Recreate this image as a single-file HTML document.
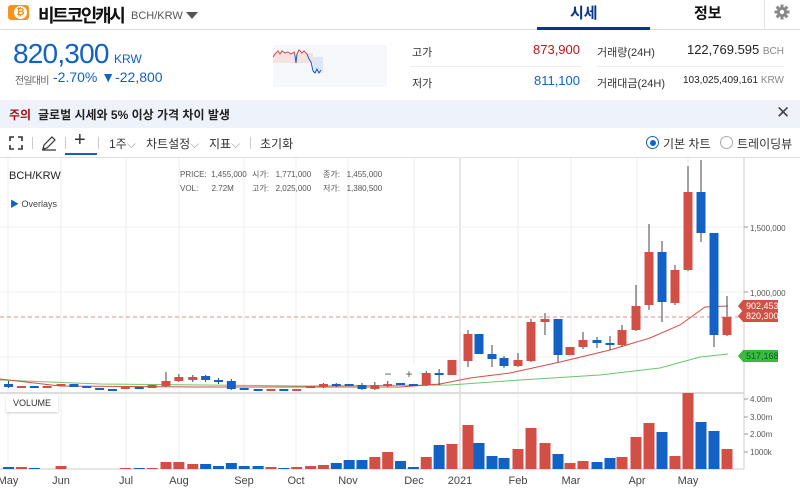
<!DOCTYPE html>
<html><head><meta charset="utf-8">
<style>
*{margin:0;padding:0;box-sizing:border-box}
body{width:800px;height:491px;overflow:hidden;background:#fff;font-family:"Liberation Sans","Noto Sans CJK KR",sans-serif;color:#222;position:relative}
.a{position:absolute;white-space:nowrap}
</style></head><body>
<div class="a" style="left:0;top:0;width:800px;height:30px;border-bottom:1px solid #ddd"></div>
<div class="a" style="left:8px;top:5px;width:21px;height:15px;background:#f7931a;border-radius:3px"></div>
<div class="a" style="left:14px;top:6px;width:13px;height:13px;border-radius:50%;background:#fff;color:#f7931a;font-size:10px;font-weight:bold;text-align:center;line-height:13px">₿</div>
<div class="a" style="left:38px;top:2px;font-size:18px;font-weight:bold;color:#111;letter-spacing:-2.3px">비트코인캐시</div>
<div class="a" style="left:131px;top:10px;font-size:11px;color:#555">BCH/KRW</div>
<div class="a" style="left:186px;top:12px;width:0;height:0;border-left:6px solid transparent;border-right:6px solid transparent;border-top:7px solid #555"></div>
<div class="a" style="left:570px;top:2px;font-size:15px;font-weight:bold;color:#093687">시세</div>
<div class="a" style="left:537px;top:27px;width:113px;height:3px;background:#093687"></div>
<div class="a" style="left:694px;top:2px;font-size:15px;font-weight:bold;color:#111">정보</div>
<div class="a" style="left:764px;top:0;width:1px;height:30px;background:#e5e5e5"></div>
<svg class="a" style="left:774px;top:4px" width="16" height="16" viewBox="0 0 16 16"><g fill="#888"><circle cx="8" cy="8" r="5"/><rect x="6.5" y="0.5" width="3" height="15"/><rect x="0.5" y="6.5" width="15" height="3"/><rect x="6.5" y="0.5" width="3" height="15" transform="rotate(45 8 8)"/><rect x="6.5" y="0.5" width="3" height="15" transform="rotate(-45 8 8)"/></g><circle cx="8" cy="8" r="2.2" fill="#fff"/></svg>
<div class="a" style="left:13px;top:38px;font-size:28px;color:#1261c4;letter-spacing:-0.8px">820,300</div>
<div class="a" style="left:114px;top:52px;font-size:12px;color:#1261c4">KRW</div>
<div class="a" style="left:15px;top:72px;font-size:10px;color:#666;letter-spacing:-0.8px">전일대비</div>
<div class="a" style="left:53px;top:69px;font-size:14px;color:#1261c4">-2.70% ▼-22,800</div>
<svg class="a" style="left:273px;top:45px" width="114" height="42"><rect width="114" height="42" fill="#f6f8fc"/><rect x="0" y="8" width="40" height="10" fill="#f7e2e2"/><rect x="40" y="12" width="10" height="16" fill="#dde7f6"/><polyline fill="none" stroke="#c84a4a" stroke-width="1" points="0,12 3,8 5,6 7,9 9,6 12,8 15,7 18,9 21,7 22,11"/><polyline fill="none" stroke="#c84a4a" stroke-width="1" points="24,9 26,5 29,8 31,6 34,9"/><polyline fill="none" stroke="#1261c4" stroke-width="1" points="22,11 23,18 24,9"/><polyline fill="none" stroke="#1261c4" stroke-width="1" points="34,9 36,14 38,17 40,26 42,28 44,24 46,28 48,25"/></svg>
<div class="a" style="left:412px;top:44px;font-size:11px;color:#333">고가</div>
<div class="a" style="left:520px;top:42px;font-size:13px;color:#c01616;width:60px;text-align:right">873,900</div>
<div class="a" style="left:410px;top:66px;width:172px;height:1px;background:#eee"></div>
<div class="a" style="left:412px;top:75px;font-size:11px;color:#333">저가</div>
<div class="a" style="left:520px;top:73px;font-size:13px;color:#1261c4;width:60px;text-align:right">811,100</div>
<div class="a" style="left:597px;top:44px;font-size:11px;color:#333">거래량(24H)</div>
<div class="a" style="left:660px;top:42px;font-size:13px;color:#222;width:124px;text-align:right">122,769.595 <span style="font-size:10px;color:#888">BCH</span></div>
<div class="a" style="left:597px;top:66px;width:187px;height:1px;background:#eee"></div>
<div class="a" style="left:597px;top:75px;font-size:11px;color:#333">거래대금(24H)</div>
<div class="a" style="left:660px;top:75px;font-size:10px;color:#222;width:124px;text-align:right">103,025,409,161 <span style="color:#888">KRW</span></div>
<div class="a" style="left:0;top:100px;width:800px;height:28px;background:#eef3fb"></div>
<div class="a" style="left:9px;top:106px;font-size:12px;font-weight:bold;color:#a01414">주의</div>
<div class="a" style="left:38px;top:106px;font-size:12px;font-weight:bold;color:#222">글로벌 시세와 5% 이상 가격 차이 발생</div>
<div class="a" style="left:776px;top:103px;font-size:17px;color:#444">✕</div>
<div class="a" style="left:0;top:157px;width:800px;height:1px;background:#e0e0e0"></div>
<svg class="a" style="left:9px;top:136px" width="14" height="14"><path d="M1 5V1H5M9 1H13V5M13 9V13H9M5 13H1V9" fill="none" stroke="#333" stroke-width="1.6"/></svg>
<div class="a" style="left:32px;top:137px;width:1px;height:12px;background:#ccc"></div>
<svg class="a" style="left:41px;top:135px" width="16" height="16"><path d="M2 14L3 10L11 2L14 5L6 13Z M1 15H15" fill="none" stroke="#333" stroke-width="1.2"/></svg>
<div class="a" style="left:65px;top:137px;width:1px;height:12px;background:#ccc"></div>
<div class="a" style="left:74px;top:129px;font-size:20px;color:#333">+</div>
<div class="a" style="left:65px;top:153px;width:32px;height:2px;background:#1261c4"></div>
<div class="a" style="left:98px;top:137px;width:1px;height:12px;background:#ccc"></div>
<div class="a" style="left:109px;top:135px;font-size:12px;color:#333">1주<span style="color:#999">⌵</span></div>
<div class="a" style="left:146px;top:135px;font-size:12px;color:#333">차트설정<span style="color:#999">⌵</span></div>
<div class="a" style="left:209px;top:135px;font-size:12px;color:#333">지표<span style="color:#999">⌵</span></div>
<div class="a" style="left:250px;top:137px;width:1px;height:12px;background:#ccc"></div>
<div class="a" style="left:260px;top:135px;font-size:12px;color:#333">초기화</div>
<div class="a" style="left:646px;top:136px;width:13px;height:13px;border-radius:50%;border:1.5px solid #1261c4"></div>
<div class="a" style="left:649.5px;top:139.5px;width:6px;height:6px;border-radius:50%;background:#1261c4"></div>
<div class="a" style="left:663px;top:135px;font-size:12px;color:#333">기본 차트</div>
<div class="a" style="left:720px;top:136px;width:13px;height:13px;border-radius:50%;border:1px solid #aaa"></div>
<div class="a" style="left:737px;top:135px;font-size:12px;color:#333">트레이딩뷰</div>
<svg id="ch" class="a" style="left:0;top:0" width="800" height="491" font-family="Liberation Sans, Noto Sans CJK KR, sans-serif"></svg>
<div class="a" style="left:9px;top:170px;font-size:11px;color:#222">BCH/KRW</div>
<div class="a" style="left:10px;top:197px;font-size:9px;color:#1261c4">▶ <span style="color:#444">Overlays</span></div>
<div class="a" style="left:180px;top:168px;font-size:8px;color:#555;line-height:14px">PRICE:&nbsp; 1,455,000<br>VOL:&nbsp;&nbsp;&nbsp;&nbsp;&nbsp; 2.72M</div>
<div class="a" style="left:252px;top:168px;font-size:8px;color:#555;line-height:14px">시가:&nbsp;&nbsp; 1,771,000<br>고가:&nbsp;&nbsp; 2,025,000</div>
<div class="a" style="left:323px;top:168px;font-size:8px;color:#555;line-height:14px">종가:&nbsp;&nbsp; 1,455,000<br>저가:&nbsp;&nbsp; 1,380,500</div>
<div class="a" style="left:6px;top:395px;width:52px;height:17px;background:#fff;box-shadow:0 1px 2px #ccc;font-size:9px;color:#333;text-align:center;line-height:17px">VOLUME</div>
<script>
var s='',R='#d24f45',B='#1261c4';
function L(x1,y1,x2,y2,c,w,d){s+='<line x1="'+x1+'" y1="'+y1+'" x2="'+x2+'" y2="'+y2+'" stroke="'+c+'" stroke-width="'+(w||1)+'"'+(d?' stroke-dasharray="'+d+'"':'')+'/>';}
function T(x,y,t,c,sz,a){s+='<text x="'+x+'" y="'+y+'" fill="'+c+'" font-size="'+sz+'"'+(a?' text-anchor="'+a+'"':'')+'>'+t+'</text>';}
var months=[[8,'May'],[61,'Jun'],[126,'Jul'],[179,'Aug'],[244,'Sep'],[296,'Oct'],[348,'Nov'],[414,'Dec'],[460,'2021'],[518,'Feb'],[571,'Mar'],[637,'Apr'],[688,'May']];
months.forEach(function(m){L(m[0],158,m[0],469,m[1]=='2021'?'#ccc':'#eee');T(m[0],484,m[1],'#444',11,'middle');});
[227,292,357].forEach(function(y){L(0,y,744,y,'#f0f0f0');});
L(0,393,744,393,'#ddd',2);L(744,158,744,469,'#ccc');L(0,469,744,469,'#ccc');
var c1=[[8,384,387,381,388,B],[20,386,388,0,0,R],[32,386,388,0,0,B],[44,386,388,0,0,R],[57,384,386,0,0,R],[69,384,387,0,0,B],[81,386,388,0,0,B],[93,388,390,0,0,B],[105,389,391,0,0,B],[117,387,389,0,0,R],[130,387,389,0,0,B],[142,385,388,0,0,R],[155,381,386,372,387,R],[167,377,381,374,382,R],[180,377,380,375,382,R],[192,376,380,375,382,B],[204,380,382,378,384,B],[216,381,389,379,390,B],[228,388,390,0,0,B],[241,389,391,0,0,B],[253,389,391,0,0,R],[265,389,391,0,0,B],[277,389,391,0,0,R],[290,386,388,0,0,R],[302,384,387,383,388,R],[314,384,386,383,387,B],[326,384,386,0,0,B],[338,385,389,383,390,B],[350,385,389,382,390,R],[362,384,386,381,387,R],[374,383,385,0,0,B],[386,384,386,0,0,B],[398,373,385,371,386,R],[410,373,375,369,385,B],[422,360,375,0,0,R]];
var c2=[[468,334,361,330,367,R],[479,334,354,0,0,B],[492,354,359,345,367,B],[504,358,366,356,368,B],[518,360,366,353,367,R],[531,322,361,319,362,R],[545,319,322,313,335,R],[558,319,355,0,362,B],[570,347,355,0,0,R],[583,340,347,332,349,R],[597,340,343,337,348,B],[610,343,345,336,350,B],[622,330,345,325,347,R],[636,306,330,285,331,R],[649,252,305,224,310,R],[662,252,302,241,322,B],[675,270,303,265,305,R],[688,192,270,166,271,R],[701,192,233,160,242,B],[714,233,335,0,347,B],[727,317,335,296,336,R]];
c1.forEach(function(c){c[0]=c[0]*1.071;});
var cs=c1.concat(c2);
var vols=[467,467,468,469,466,469,469,469,469,468,468,468,462,462,464,464,466,463,466,466,467,468,467,466,465,463,460,460,457,452,461,467,457,445,444];
var vols2=[425,443,456,458,449,428,443,454,463,461,462,458,457,437,423,432,456,393,422,431,449];
var vv=vols.concat(vols2);
cs.forEach(function(c,i){var v=vv[i];if(v<469)s+='<rect x="'+(c[0]-5.5)+'" y="'+v+'" width="11" height="'+(469-v)+'" fill="'+c[5]+'"/>';});
s+='<polyline fill="none" stroke="#6cc66c" stroke-width="1" points="0,380 100,384 300,386 450,385 520,380 600,375 660,368 700,357 728,354"/>';
s+='<polyline fill="none" stroke="#d24f45" stroke-width="1" points="0,379 60,386 200,387 400,387 440,384 470,378 510,373 560,362 610,350 650,338 680,325 705,307 728,306"/>';
L(0,317,744,317,'#e88','1','4,3');
cs.forEach(function(c){if(c[3])L(c[0],c[3],c[0],c[4]||c[2],'#444');else if(c[4])L(c[0],c[2],c[0],c[4],'#444');s+='<rect x="'+(c[0]-4.5)+'" y="'+c[1]+'" width="9" height="'+Math.max(2,c[2]-c[1])+'" fill="'+c[5]+'"/>';});
s+='<rect x="378" y="365" width="40" height="16" fill="#fff" opacity="0.8"/>';T(388,378,'−','#555',12,'middle');T(409,378,'+','#555',12,'middle');
[[231,'1,500,000'],[296,'1,000,000']].forEach(function(a){L(744,a[0]-4,748,a[0]-4,'#999');T(750,a[0],a[1],'#555',8);});
[[402,'4.00m'],[420,'3.00m'],[437,'2.00m'],[455,'1000k']].forEach(function(a){L(744,a[0]-3,748,a[0]-3,'#999');T(750,a[0],a[1],'#555',8);});
function tag(y,t,c){s+='<path d="M738,'+y+' L743,'+(y-6)+' L778,'+(y-6)+' L778,'+(y+6)+' L743,'+(y+6)+'Z" fill="'+c+'"/>';T(746,y+3,t,c=='#3cba3c'?'#063':'#fff',9);}
tag(306,'902,453','#d24f45');tag(316,'820,300','#d24f45');tag(356,'517,168','#3cba3c');
document.getElementById('ch').innerHTML=s;
</script>
</body></html>
